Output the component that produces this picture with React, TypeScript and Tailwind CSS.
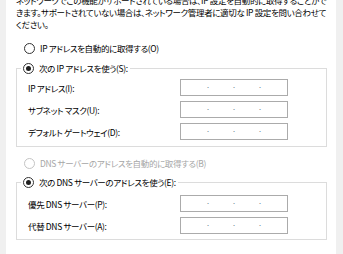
import React from 'react';

const font = "font-['Noto_Sans_CJK_JP','Noto_Sans',sans-serif] [font-feature-settings:'palt'] tracking-[-0.35px]";

const Radio: React.FC<{ checked?: boolean; disabled?: boolean }> = ({ checked, disabled }) => (
  <span
    className={`flex h-[11px] w-[11px] shrink-0 items-center justify-center rounded-full border bg-white ${
      disabled ? 'border-[#c4c4c4]' : 'border-[#333333]'
    }`}
  >
    {checked && <span className="h-[5px] w-[5px] rounded-full bg-[#1f1f1f]" />}
  </span>
);

const IpField: React.FC = () => (
  <div className="flex h-[17px] w-[108px] items-center border border-[#ababab] bg-white pl-[2px]">
    {[0, 1, 2].map((i) => (
      <React.Fragment key={i}>
        <span className="w-[24px]" />
        <span className="flex w-[2px] justify-center font-['Liberation_Sans',sans-serif] text-[9px] leading-none tracking-normal text-[#6f7d93] -translate-y-[2px]">
          .
        </span>
      </React.Fragment>
    ))}
  </div>
);

const Row: React.FC<{ label: string }> = ({ label }) => (
  <div className="flex h-[17px] items-center">
    <span className="w-[152px] text-[8.5px] leading-[12px] text-black">{label}</span>
    <IpField />
  </div>
);

const Group: React.FC<{ legend: string; rows: string[]; pt: string; pb: string }> = ({ legend, rows, pt, pb }) => (
  <fieldset className="w-[311px] border border-[#dcdcdc]">
    <legend className="ml-[4px] flex items-center gap-[5px] px-[2px] text-[8.5px] leading-[12px] text-black">
      <Radio checked />
      <span>{legend}</span>
    </legend>
    <div className={`flex flex-col gap-[5px] pl-[11px] ${pt} ${pb}`}>
      {rows.map((r) => (
        <Row key={r} label={r} />
      ))}
    </div>
  </fieldset>
);

export default function App() {
  return (
    <div className={`flex h-[254px] w-[343px] overflow-hidden bg-[#f0f0f0] ${font}`}>
      <div className="w-[6px] shrink-0" />
      <div className="w-[330px] shrink-0 bg-white pl-[10px]">
        <p className="-mt-[6px] whitespace-nowrap text-[8.5px] leading-[12px] text-black">
          ネットワークでこの機能がサポートされている場合は、IP 設定を自動的に取得することがで
          <br />
          きます。サポートされていない場合は、ネットワーク管理者に適切な IP 設定を問い合わせて
          <br />
          ください。
        </p>

        <div className="mt-[12px] ml-[8px] flex h-[12px] items-center gap-[5px] text-[8.5px] leading-[12px] text-black">
          <Radio />
          <span>IP アドレスを自動的に取得する(O)</span>
        </div>

        <div className="mt-[8px]">
          <Group
            legend="次の IP アドレスを使う(S):"
            rows={['IP アドレス(I):', 'サブネット マスク(U):', 'デフォルト ゲートウェイ(D):']}
            pt="pt-[5px]"
            pb="pb-[6px]"
          />
        </div>

        <div className="mt-[10px] ml-[8px] flex h-[12px] items-center gap-[5px] text-[8.5px] leading-[12px] text-[#a6a6a6]">
          <Radio disabled />
          <span>DNS サーバーのアドレスを自動的に取得する(B)</span>
        </div>

        <div className="mt-[7px]">
          <Group
            legend="次の DNS サーバーのアドレスを使う(E):"
            rows={['優先 DNS サーバー(P):', '代替 DNS サーバー(A):']}
            pt="pt-[7px]"
            pb="pb-[5px]"
          />
        </div>
      </div>
      <div className="flex-1" />
    </div>
  );
}
